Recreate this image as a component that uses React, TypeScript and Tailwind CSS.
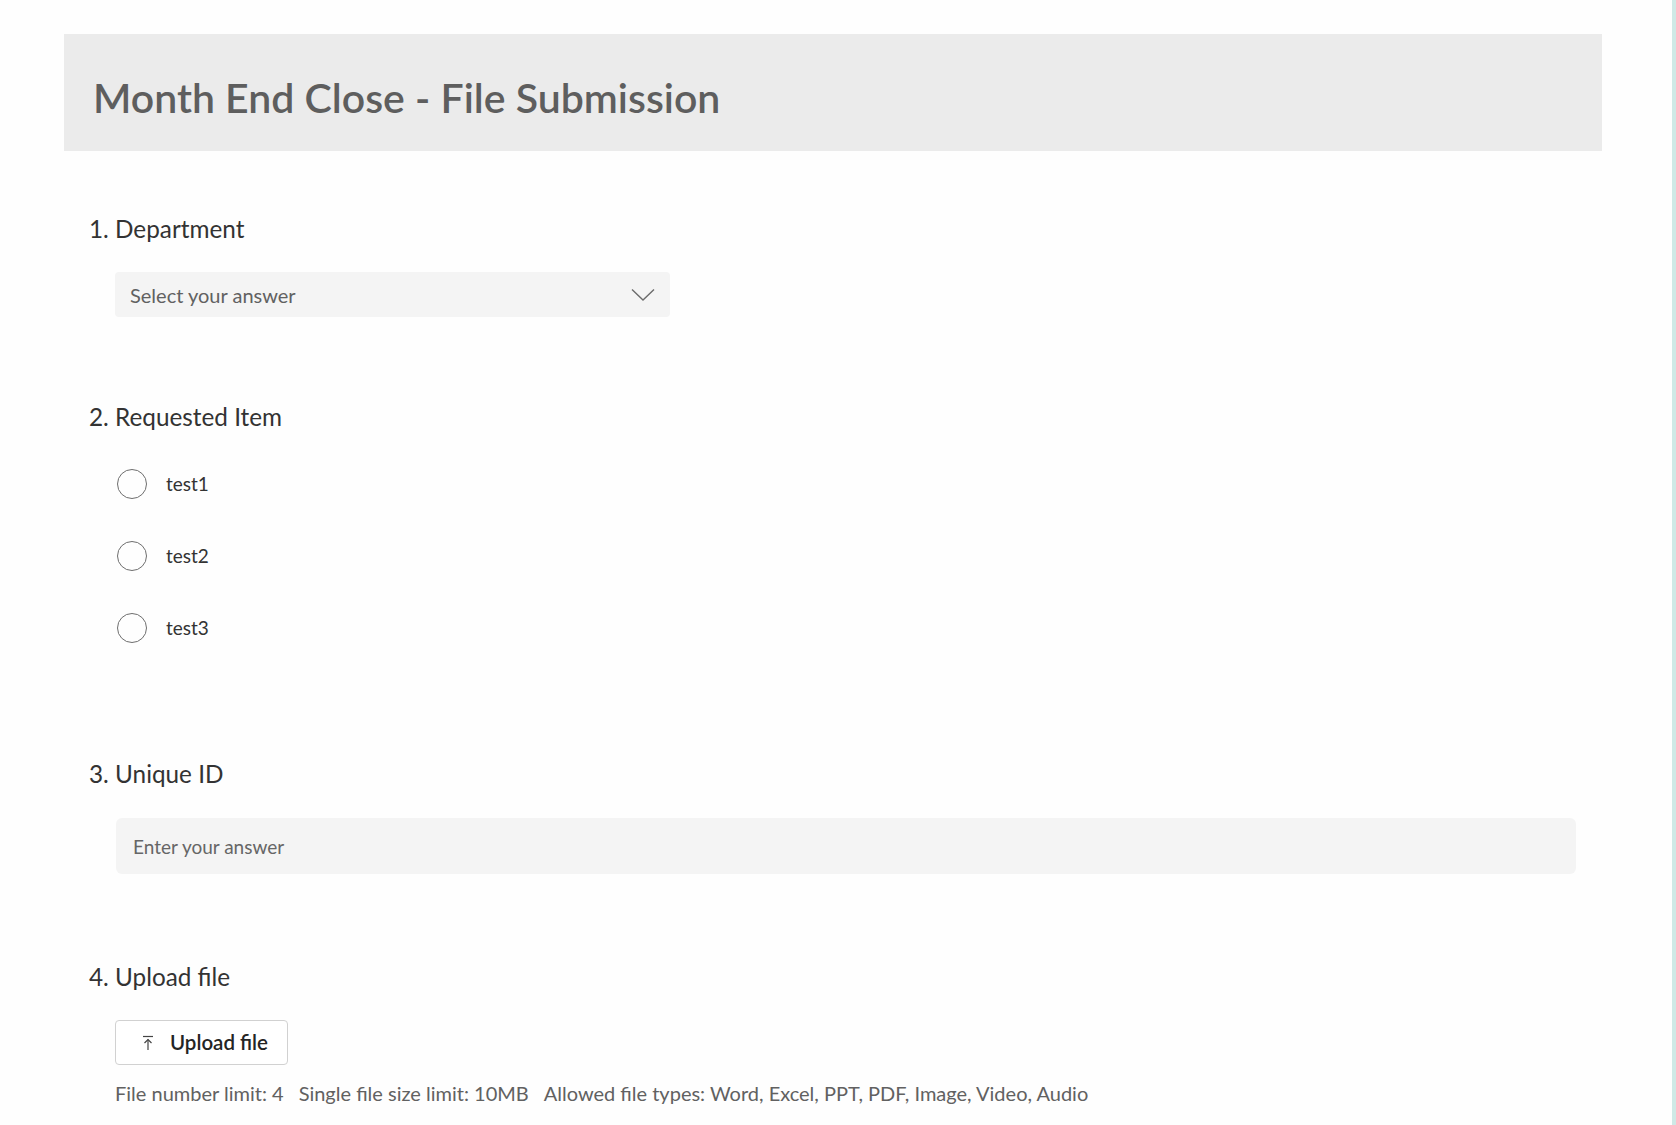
import { useState } from "react";

const OPTIONS = ["test1", "test2", "test3"];

function Chevron() {
  return (
    <svg width="24" height="14" viewBox="0 0 24 14" fill="none">
      <path d="M1 1.5 L12 12 L23 1.5" stroke="#6b6b6b" strokeWidth="1.4" />
    </svg>
  );
}

function UploadIcon() {
  return (
    <svg width="12" height="16" viewBox="0 0 12 16" fill="none">
      <path d="M1 1.5 H11" stroke="#444" strokeWidth="1.2" />
      <path d="M6 15 V4.5" stroke="#444" strokeWidth="1.2" />
      <path d="M2.5 8 L6 4.5 L9.5 8" stroke="#444" strokeWidth="1.2" />
    </svg>
  );
}

function Question({ n, title }: { n: number; title: string }) {
  return (
    <div className="h-[32px] text-[24.3px] leading-[32px] text-[#333333]">
      {n}. {title}
    </div>
  );
}

export default function App() {
  const [picked, setPicked] = useState<string | null>(null);

  return (
    <div
      className="flex min-h-[1125px] bg-[#fefefe]"
      style={{ fontFamily: "Lato, 'Open Sans', sans-serif" }}
    >
      <div className="w-[1672px] pl-[64px]">
        <div className="w-[1538px]">
          <header className="mt-[34px] flex h-[117px] items-center bg-[#ebebeb] pl-[29px] pt-[10px]">
            <h1 className="text-[41px] font-semibold leading-[52px] text-[#5e5e5e]">
              Month End Close - File Submission
            </h1>
          </header>

          <div className="pl-[25px]">
            <section className="mt-[62px]">
              <Question n={1} title="Department" />
              <button className="ml-[26px] mt-[27px] flex h-[45px] w-[555px] items-center justify-between rounded-[4px] bg-[#f4f4f4] pl-[15px] pr-[15px] pt-[1px] text-[20px] text-[#616161]">
                <span>Select your answer</span>
                <Chevron />
              </button>
            </section>

            <section className="mt-[84px]">
              <Question n={2} title="Requested Item" />
              <div className="ml-[28px] mt-[36px] flex flex-col gap-[42px]">
                {OPTIONS.map((o) => (
                  <label
                    key={o}
                    className="flex h-[30px] cursor-pointer items-center gap-[19px] text-[19px] text-[#333333]"
                    onClick={() => setPicked(o)}
                  >
                    <span className="flex h-[30px] w-[30px] items-center justify-center rounded-full border-[1.5px] border-[#6e6e6e]">
                      {picked === o && (
                        <span className="h-[14px] w-[14px] rounded-full bg-[#333]" />
                      )}
                    </span>
                    {o}
                  </label>
                ))}
              </div>
            </section>

            <section className="mt-[115px]">
              <Question n={3} title="Unique ID" />
              <input
                placeholder="Enter your answer"
                className="ml-[27px] mt-[28px] block h-[56px] w-[1460px] rounded-[6px] bg-[#f4f4f4] px-[17px] text-[19px] text-[#333] outline-none placeholder:text-[#666666]"
              />
            </section>

            <section className="mt-[87px]">
              <Question n={4} title="Upload file" />
              <button className="ml-[26px] mt-[27px] flex h-[45px] w-[173px] items-center gap-[16px] rounded-[4px] border border-[#d1d1d1] bg-white pl-[26px] text-[20.5px] font-semibold text-[#242424]">
                <UploadIcon />
                Upload file
              </button>
              <div className="ml-[26px] mt-[16px] flex gap-[15px] text-[20px] leading-[24px] text-[#616161]">
                <span>File number limit: 4</span>
                <span>Single file size limit: 10MB</span>
                <span>Allowed file types: Word, Excel, PPT, PDF, Image, Video, Audio</span>
              </div>
            </section>
          </div>
        </div>
      </div>
      <div className="w-[4px] bg-[#cfe9e6]" />
    </div>
  );
}
